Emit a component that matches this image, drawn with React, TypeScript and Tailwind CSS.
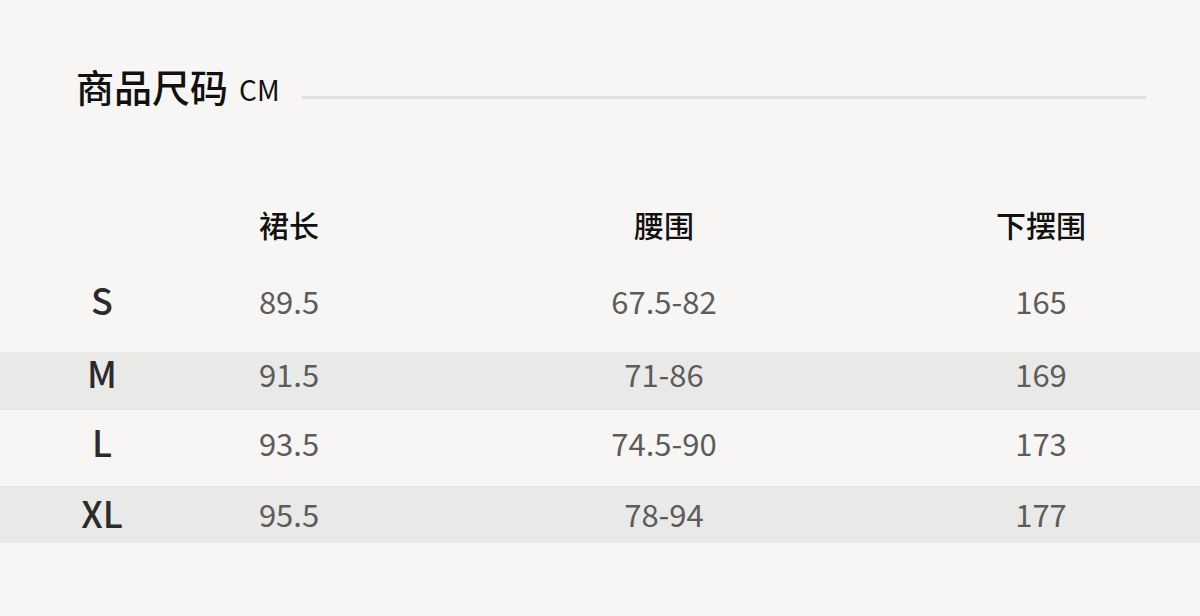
const rows = [
  { size: 'S', values: ['89.5', '67.5-82', '165'], striped: false, className: 'h-[84px] pt-[11px]' },
  { size: 'M', values: ['91.5', '71-86', '169'], striped: true, className: 'h-[58px] pt-[0px]' },
  { size: 'L', values: ['93.5', '74.5-90', '173'], striped: false, className: 'h-[76px] pt-[11px]' },
  { size: 'XL', values: ['95.5', '78-94', '177'], striped: true, className: 'h-[57px] pt-[6px]' },
]

const grid = 'grid grid-cols-[204px_170px_580px_174px]'

export default function App() {
  return (
    <div
      className="h-[616px] w-[1200px] overflow-hidden bg-[#f7f6f4]"
      style={{ fontFamily: '"Noto Sans CJK SC", "Noto Sans", sans-serif' }}
    >
      <div className="mt-[66px] flex h-[40px] items-center pl-[76px] pr-[54px]">
        <h1 className="text-[38px] font-medium leading-none text-[#111]">商品尺码</h1>
        <span className="ml-[11px] mt-[6px] text-[28px] leading-none text-[#111]">CM</span>
        <div className="ml-[22px] mt-[23px] h-[3px] flex-1 bg-[#dfdfdd]" />
      </div>

      <div className={`${grid} mt-[98px] h-[40px] items-center text-center text-[30px] font-medium leading-[40px] text-[#111]`}>
        <div />
        <div>裙长</div>
        <div>腰围</div>
        <div>下摆围</div>
      </div>

      <div className="mt-[24px]">
        {rows.map((row) => (
          <div
            key={row.size}
            className={`${grid} items-start text-center ${row.className} ${row.striped ? 'bg-[#e9e9e8]' : ''}`}
          >
            <div className="text-[36px] font-medium leading-[40px] text-[#2b2b2b]">{row.size}</div>
            {row.values.map((value) => (
              <div key={value} className="pt-[2px] text-[31px] font-normal leading-[40px] text-[#5c5c5c]">
                {value}
              </div>
            ))}
          </div>
        ))}
      </div>
    </div>
  )
}
